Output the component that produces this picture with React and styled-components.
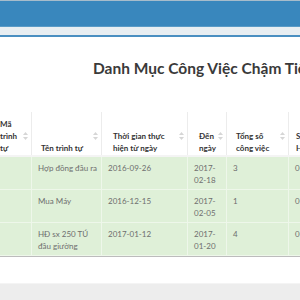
import React from "react";
import styled, { createGlobalStyle } from "styled-components";

const GlobalStyle = createGlobalStyle`
  html, body { margin: 0; padding: 0; background: #fff; overflow: hidden; }
  body { font-family: Lato, "Open Sans", "Liberation Sans", sans-serif; }
`;

const Page = styled.div`
  width: 300px;
  height: 300px;
  overflow: hidden;
  display: flex;
  flex-direction: column;
`;

const Navbar = styled.div`
  height: 25px;
  background: #3987bd;
  border-top: 1px solid #a7bccb;
  border-bottom: 1px solid #5a9bc7;
  flex: none;
`;

const ContentBand = styled.div`
  height: 8px;
  background: #e8eef2;
  flex: none;
`;

const Box = styled.div`
  background: #fff;
  border-top: 2px solid #4a8fc1;
  display: flex;
  flex-direction: column;
  flex: none;
`;

const Title = styled.h3`
  margin: 20px 0 0 93px;
  font-size: 15.5px;
  line-height: 22px;
  font-weight: 700;
  color: #3a3a3a;
  white-space: nowrap;
`;

const ScrollArea = styled.div`
  margin-top: 33px;
  overflow: hidden;
  border-bottom: 1px solid #bcbcbc;
  box-shadow: 0 1px 0 #e2e2e2;
`;

const Table = styled.table`
  margin-left: -12px;
  width: 360px;
  table-layout: fixed;
  border-collapse: collapse;
  font-size: 8px;
`;

const Th = styled.th`
  position: relative;
  text-align: left;
  vertical-align: bottom;
  font-weight: 700;
  color: #333;
  line-height: 12px;
  padding: 6px 9px 1px ${(p) => p.$pl || 9}px;
  border-left: 1px solid #ececec;
  border-bottom: 2px solid #f4f4f4;
  white-space: nowrap;
`;

const SortIcon = styled.svg`
  position: absolute;
  right: 3px;
  top: 20px;
  width: 5px;
  height: 8px;
`;

const Tr = styled.tr`
  background: #dff0d8;
`;

const Td = styled.td`
  vertical-align: top;
  color: #6e6e6e;
  line-height: 12px;
  padding: 5px 6px 3px ${(p) => p.$pl || 6}px;
  border-left: 1px solid #eef7ea;
  border-bottom: 1px solid #eef7ea;
  white-space: nowrap;
`;

const Spacer = styled.div`
  height: 26px;
  background: #fff;
`;

const Footer = styled.div`
  flex: 1;
  background: #ededed;
  border-top: 1px solid #f4f4f4;
`;

const Sort = () => (
  <SortIcon viewBox="0 0 5 8">
    <polygon points="2.5,0 5,3 0,3" fill="#d6d6d6" />
    <polygon points="0,5 5,5 2.5,8" fill="#d6d6d6" />
  </SortIcon>
);

const headers = [
  { lines: ["Mã", "trình", "tự"], pl: 11 },
  { lines: ["Tên trình tự"] },
  { lines: ["Thời gian thực", "hiện từ ngày"], pl: 11 },
  { lines: ["Đến", "ngày"], pl: 11 },
  { lines: ["Tổng số", "công việc"] },
  { lines: ["Số", "HĐ"], pl: 7 },
];

const rows = [
  ["", ["Hợp đồng đầu ra"], ["2016-09-26"], ["2017-", "02-18"], ["3"], ["0"]],
  ["", ["Mua Máy"], ["2016-12-15"], ["2017-", "02-05"], ["1"], ["0"]],
  ["", ["HĐ sx 250 TÚ", "đầu giường"], ["2017-01-12"], ["2017-", "01-20"], ["4"], ["0"]],
];

const widths = [43, 70, 86, 39, 62, 60];

const Lines = ({ lines }) =>
  lines.map((l, i) => (
    <React.Fragment key={i}>
      {i > 0 && <br />}
      {l}
    </React.Fragment>
  ));

export default function App() {
  return (
    <Page>
      <GlobalStyle />
      <Navbar />
      <ContentBand />
      <Box>
        <Title>Danh Mục Công Việc Chậm Tiến Độ</Title>
        <ScrollArea>
          <Table>
            <colgroup>
              {widths.map((w, i) => (
                <col key={i} style={{ width: w }} />
              ))}
            </colgroup>
            <thead>
              <tr>
                {headers.map((h, i) => (
                  <Th key={i} $pl={h.pl}>
                    <Lines lines={h.lines} />
                    <Sort />
                  </Th>
                ))}
              </tr>
            </thead>
            <tbody>
              {rows.map((r, ri) => (
                <Tr key={ri}>
                  <Td>{r[0]}</Td>
                  {r.slice(1).map((c, ci) => (
                    <Td key={ci}>
                      <Lines lines={c} />
                    </Td>
                  ))}
                </Tr>
              ))}
            </tbody>
          </Table>
        </ScrollArea>
        <Spacer />
      </Box>
      <Footer />
    </Page>
  );
}
